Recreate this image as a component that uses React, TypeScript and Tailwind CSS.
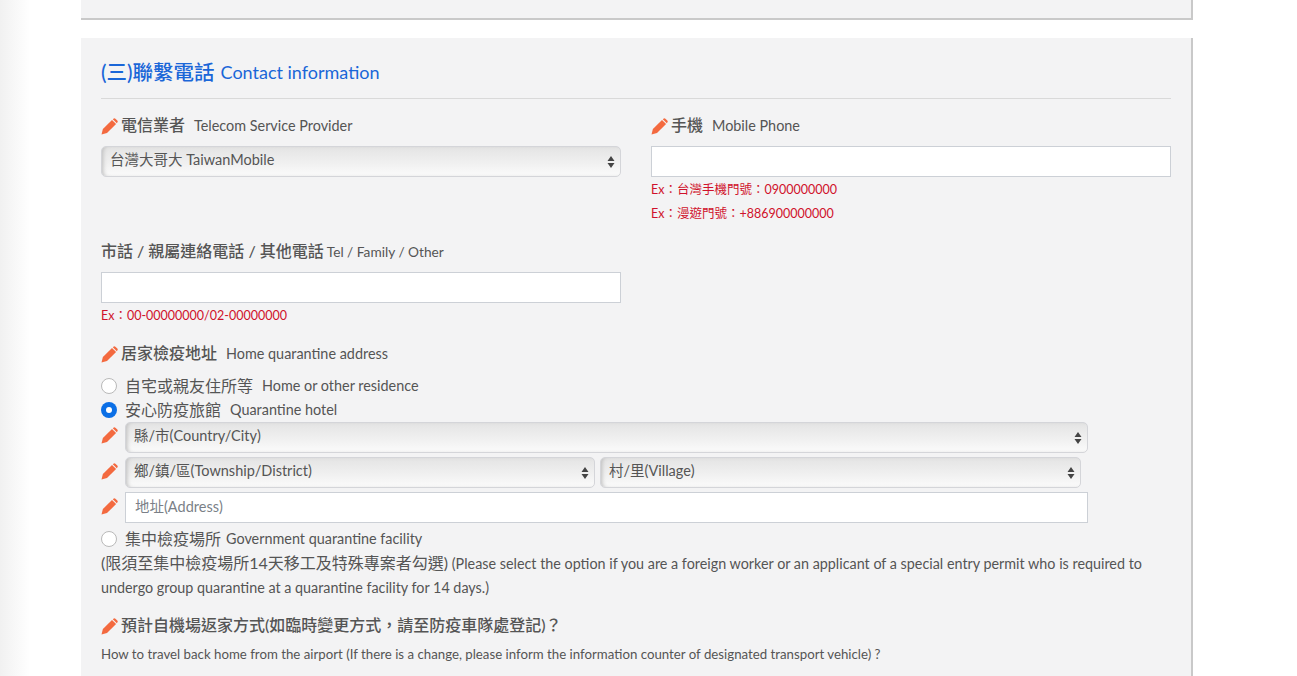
const font = 'font-["Lato","Noto_Sans_CJK_TC",sans-serif]';

const Pencil = ({ className = '' }: { className?: string }) => (
  <svg viewBox="0 0 17 17" className={`h-[17px] w-[17px] shrink-0 fill-[#f3693f] ${className}`}>
    <path d="M.5 16.5 1.9 11 11 1.9 15.1 6 6 15.1z" />
    <path d="M11.8 1.2 12.4.7a1.5 1.5 0 0 1 2 0l1.9 1.9a1.5 1.5 0 0 1 0 2l-.5.6z" />
  </svg>
);

const Label = ({ zh, en, pencil = true }: { zh: string; en?: string; pencil?: boolean }) => (
  <div className="flex h-[20px] items-center">
    {pencil && <Pencil />}
    <span className={`${pencil ? 'ml-[3px]' : ''} -translate-y-px text-[16px] font-medium text-[#555]`}>{zh}</span>
    {en && <span className={`${pencil ? 'ml-[9px] text-[14.4px]' : 'ml-[3px] text-[13.7px]'} text-[#555]`}>{en}</span>}
  </div>
);

const Arrows = () => (
  <svg viewBox="0 0 8 14" className="pointer-events-none absolute right-[6px] top-1/2 h-[14px] w-[8px] -translate-y-1/2">
    <path d="M4 1 7.5 6h-7zM4 13 .5 8h7z" fill="#444" />
  </svg>
);

const Select = ({ text, className }: { text: string; className: string }) => (
  <div className={`relative h-[31px] ${className}`}>
    <select
      defaultValue={text}
      className="h-full w-full appearance-none rounded-[5px] border border-[#d4d5d9] bg-[linear-gradient(to_bottom,#e4e4e4,#f1f1f1_60%,#fbfbfb)] pb-[3px] pl-[8px] text-[14.5px] text-[#555] shadow-[inset_3px_0_4px_-2px_#bbb]"
    >
      <option>{text}</option>
    </select>
    <Arrows />
  </div>
);

const TextBox = ({ placeholder, className }: { placeholder?: string; className: string }) => (
  <input
    placeholder={placeholder}
    className={`h-[31px] border border-[#ccd0d6] bg-white px-[9px] pb-[3px] text-[14.5px] placeholder:text-[#7a7f87] ${className}`}
  />
);

const Hint = ({ children }: { children: string }) => (
  <p className="h-[24px] text-[12.5px] leading-[26px] text-[#d0112b]">{children}</p>
);

const Radio = ({ checked, tight, zh, en }: { checked?: boolean; tight?: boolean; zh: string; en: string }) => (
  <div className="flex h-[24px] items-center">
    {checked ? (
      <span className="flex h-[16px] w-[16px] items-center justify-center rounded-full bg-[#0b6fe6]">
        <span className="h-[6px] w-[6px] rounded-full bg-white" />
      </span>
    ) : (
      <span className="h-[16px] w-[16px] rounded-full border border-[#b9b9b9] bg-white" />
    )}
    <span className="ml-[8px] text-[16px] text-[#555]">{zh}</span>
    <span className={`${tight ? 'ml-[5px]' : 'ml-[9px]'} text-[14.4px] text-[#555]`}>{en}</span>
  </div>
);

const App = () => {
  return (
    <div className={`h-[676px] overflow-hidden bg-[linear-gradient(to_right,#f1f1f1,#fff_30px)] pl-[81px] ${font}`}>
      {/* previous section, only its bottom edge is visible */}
      <div className="h-[20px] w-[1112px] border-b-2 border-r-2 border-[#c9c9c9] bg-[#f3f3f4]" />

      <section className="mt-[18px] h-[700px] w-[1112px] border-r-2 border-[#c9c9c9] bg-[#f3f3f4] pl-[20px] pr-[20px] pt-[21px]">
        <h2 className="flex h-[26px] items-center text-[#1a66d8]">
          <span className="text-[20.5px] font-medium">(三)聯繫電話</span>
          <span className="ml-[6px] text-[18px]">Contact information</span>
        </h2>
        <div className="mt-[13px] border-t border-[#d9d9d9]" />

        <div className="mt-[17px] grid grid-cols-[520px_520px] gap-x-[30px]">
          <div>
            <Label zh="電信業者" en="Telecom Service Provider" />
            <Select text="台灣大哥大 TaiwanMobile" className="mt-[10px] w-[520px]" />
          </div>
          <div>
            <Label zh="手機" en="Mobile Phone" />
            <TextBox className="mt-[10px] block w-[520px]" />
            <Hint>Ex：台灣手機門號：0900000000</Hint>
            <Hint>Ex：漫遊門號：+886900000000</Hint>
          </div>
        </div>

        <div className="mt-[17px]">
          <Label pencil={false} zh="市話 / 親屬連絡電話 / 其他電話" en="Tel / Family / Other" />
          <TextBox className="mt-[10px] block w-[520px]" />
          <Hint>Ex：00-00000000/02-00000000</Hint>
        </div>

        <div className="mt-[17px]">
          <Label zh="居家檢疫地址" en="Home quarantine address" />
          <div className="mt-[10px]">
            <Radio zh="自宅或親友住所等" en="Home or other residence" />
            <Radio checked zh="安心防疫旅館" en="Quarantine hotel" />
          </div>
          <div className="flex items-center">
            <Pencil className="-translate-y-[2px]" />
            <Select text="縣/市(Country/City)" className="ml-[7px] w-[963px]" />
          </div>
          <div className="mt-[4px] flex items-center">
            <Pencil className="-translate-y-px" />
            <Select text="鄉/鎮/區(Township/District)" className="ml-[7px] w-[470px]" />
            <Select text="村/里(Village)" className="ml-[5px] w-[481px]" />
          </div>
          <div className="mt-[4px] flex items-center">
            <Pencil className="-translate-y-px" />
            <TextBox placeholder="地址(Address)" className="ml-[7px] w-[963px]" />
          </div>
          <div className="mt-[4px]">
            <Radio tight zh="集中檢疫場所" en="Government quarantine facility" />
          </div>
          <p className="text-[14.35px] leading-[24px] text-[#555]">
            <span className="text-[16px]">(限須至集中檢疫場所14天移工及特殊專案者勾選)</span> (Please select the option if you are a foreign worker or an applicant of a special entry permit who is required to undergo group quarantine at a quarantine facility for 14 days.)
          </p>
        </div>

        <div className="mt-[16px]">
          <Label zh="預計自機場返家方式(如臨時變更方式，請至防疫車隊處登記)？" />
          <p className="mt-[8px] text-[13.25px] leading-[20px] text-[#555]">
            How to travel back home from the airport (If there is a change, please inform the information counter of designated transport vehicle) ?
          </p>
        </div>
      </section>
    </div>
  );
};

export default App;
